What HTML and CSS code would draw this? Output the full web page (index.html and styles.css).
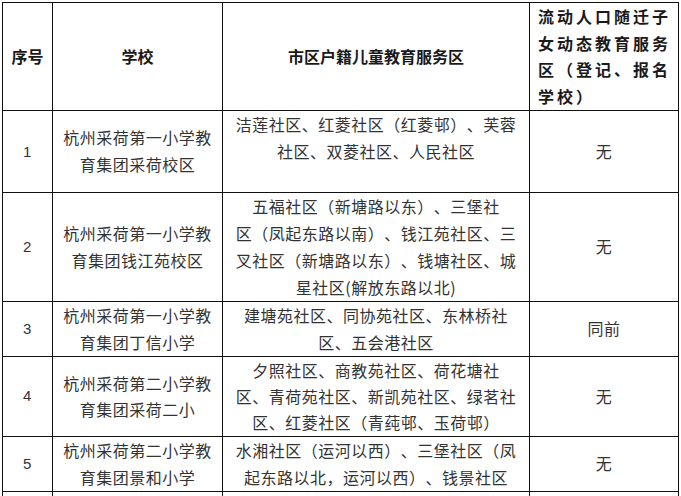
FILE: index.html
```html
<!DOCTYPE html>
<html lang="zh-CN">
<head>
<meta charset="utf-8">
<title>服务区</title>
<link rel="stylesheet" href="styles.css">
</head>
<body>
<table class="zone-table">
  <colgroup>
    <col class="c-no">
    <col class="c-school">
    <col class="c-area">
    <col class="c-float">
  </colgroup>
  <thead>
    <tr class="head-row">
      <th>序号</th>
      <th>学校</th>
      <th>市区户籍儿童教育服务区</th>
      <th class="float-head">流动人口随迁子女动态教育服务区（登记、报名学校）</th>
    </tr>
  </thead>
  <tbody>
    <tr>
      <td class="num">1</td>
      <td>杭州采荷第一小学教<br>育集团采荷校区</td>
      <td>洁莲社区、红菱社区（红菱邨）、芙蓉<br>社区、双菱社区、人民社区<br>&nbsp;</td>
      <td>无</td>
    </tr>
    <tr>
      <td class="num">2</td>
      <td>杭州采荷第一小学教<br>育集团钱江苑校区</td>
      <td>五福社区（新塘路以东）、三堡社<br>区（凤起东路以南）、钱江苑社区、三<br>叉社区（新塘路以东）、钱塘社区、城<br>星社区(解放东路以北)</td>
      <td>无</td>
    </tr>
    <tr>
      <td class="num">3</td>
      <td>杭州采荷第一小学教<br>育集团丁信小学</td>
      <td>建塘苑社区、同协苑社区、东林桥社<br>区、五会港社区</td>
      <td>同前</td>
    </tr>
    <tr class="tight">
      <td class="num">4</td>
      <td>杭州采荷第二小学教<br>育集团采荷二小</td>
      <td>夕照社区、商教苑社区、荷花塘社<br>区、青荷苑社区、新凯苑社区、绿茗社<br>区、红菱社区（青莼邨、玉荷邨）</td>
      <td>无</td>
    </tr>
    <tr>
      <td class="num">5</td>
      <td>杭州采荷第二小学教<br>育集团景和小学</td>
      <td>水湘社区（运河以西）、三堡社区（凤<br>起东路以北，运河以西）、钱景社区</td>
      <td>无</td>
    </tr>
    <tr class="next-row">
      <td></td>
      <td></td>
      <td></td>
      <td></td>
    </tr>
  </tbody>
</table>
</body>
</html>
```

FILE: styles.css
```css
html, body {
  margin: 0;
  padding: 0;
  background: #ffffff;
}

body {
  font-family: "Noto Sans CJK SC", "Noto Sans", sans-serif;
  color: #333333;
  text-spacing-trim: space-all;
}

.zone-table {
  margin: 2px 0 0 2px;
  width: 677px;
  table-layout: fixed;
  border-collapse: collapse;
  font-size: 16px;
  line-height: 27px;
}

.c-no { width: 50px; }
.c-school { width: 170px; }
.c-area { width: 307px; }
.c-float { width: 149px; }

.zone-table th,
.zone-table td {
  border: 1px solid #111111;
  padding: 0 4px;
  text-align: center;
  vertical-align: middle;
  white-space: nowrap;
  letter-spacing: 0.5px;
  text-spacing-trim: space-all;
}

.zone-table th {
  font-weight: bold;
  color: #1a1a1a;
  letter-spacing: 0;
}

.zone-table th.float-head {
  text-align: left;
  white-space: normal;
  letter-spacing: 3px;
  padding: 0 4px 0 8px;
  line-height: 26.7px;
}

.num {
  font-family: "Liberation Sans", "Noto Sans", sans-serif;
  font-size: 15px;
}

.tight td {
  line-height: 26.3px;
}

.next-row td {
  height: 27px;
}
```
